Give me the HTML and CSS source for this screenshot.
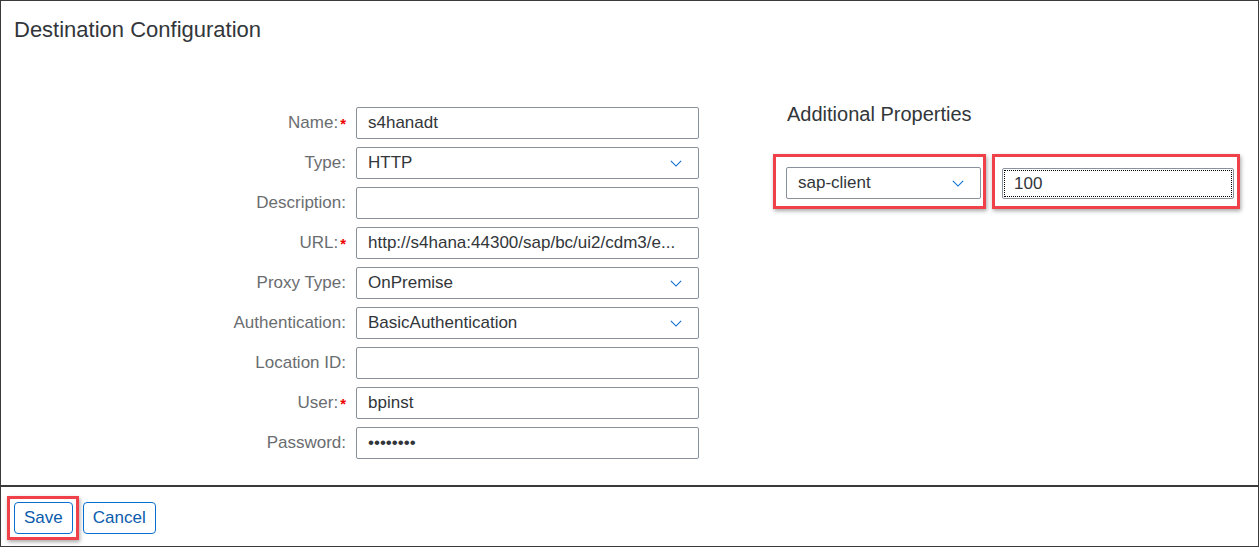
FILE: index.html
```html
<!DOCTYPE html>
<html>
<head>
<meta charset="utf-8">
<title>Destination Configuration</title>
<link rel="stylesheet" href="styles.css">
</head>
<body>
<div class="frame">
  <div class="header"><h1 class="title">Destination Configuration</h1></div>
  <div class="content">
    <div class="form">
      <label class="lbl">Name:<span class="req">*</span></label>
      <div class="field">s4hanadt</div>
      <label class="lbl">Type:</label>
      <div class="field select">HTTP<svg class="chev" viewBox="0 0 14 8"><path d="M1 1 L7 7 L13 1"/></svg></div>
      <label class="lbl">Description:</label>
      <div class="field"></div>
      <label class="lbl">URL:<span class="req">*</span></label>
      <div class="field">http://s4hana:44300/sap/bc/ui2/cdm3/e...</div>
      <label class="lbl">Proxy Type:</label>
      <div class="field select">OnPremise<svg class="chev" viewBox="0 0 14 8"><path d="M1 1 L7 7 L13 1"/></svg></div>
      <label class="lbl">Authentication:</label>
      <div class="field select">BasicAuthentication<svg class="chev" viewBox="0 0 14 8"><path d="M1 1 L7 7 L13 1"/></svg></div>
      <label class="lbl">Location ID:</label>
      <div class="field"></div>
      <label class="lbl">User:<span class="req">*</span></label>
      <div class="field">bpinst</div>
      <label class="lbl">Password:</label>
      <div class="field pwd">&#8226;&#8226;&#8226;&#8226;&#8226;&#8226;&#8226;&#8226;</div>
    </div>
    <div class="props">
      <h2 class="props-title">Additional Properties</h2>
      <div class="props-row">
        <div class="mark mark-key">
          <div class="field select key">sap-client<svg class="chev" viewBox="0 0 14 8"><path d="M1 1 L7 7 L13 1"/></svg></div>
        </div>
        <div class="mark mark-val">
          <div class="field val"><span class="focus">100</span></div>
        </div>
      </div>
    </div>
  </div>
  <div class="footer">
    <div class="mark mark-btn"><button class="btn">Save</button></div>
    <button class="btn">Cancel</button>
  </div>
</div>
</body>
</html>
```

FILE: styles.css
```css
* { box-sizing: border-box; }
html, body { margin: 0; padding: 0; background: #fff; }
body {
  font-family: "Liberation Sans", Arial, sans-serif;
  color: #32363a;
  width: 1260px;
  height: 548px;
}
.frame {
  width: 1259px;
  height: 547px;
  border: 1px solid #3a3a3a;
  display: flex;
  flex-direction: column;
}
.header { padding: 16px 13px 0; height: 106px; }
.title {
  margin: 0;
  font-size: 22px;
  font-weight: normal;
  line-height: 26px;
  color: #32363a;
}
.content {
  flex: 1;
  display: flex;
  align-items: flex-start;
}
.form {
  margin-left: 199px;
  display: grid;
  grid-template-columns: 147px 343px;
  grid-auto-rows: 32px;
  column-gap: 9px;
  row-gap: 8px;
}
.lbl {
  font-size: 17px;
  color: #6a6d70;
  display: flex;
  align-items: center;
  justify-content: flex-end;
  padding-right: 1px;
  white-space: nowrap;
}
.req { color: #e00; font-weight: bold; margin-left: 2px; font-size: 15px; }
.field {
  height: 32px;
  border: 1px solid #89919a;
  border-radius: 2px;
  background: #fff;
  font-size: 17px;
  color: #32363a;
  display: flex;
  align-items: center;
  padding: 0 11px;
  white-space: nowrap;
  overflow: hidden;
}
.select { justify-content: space-between; }
.chev {
  width: 12px;
  height: 7px;
  margin-right: 5px;
  fill: none;
  stroke: #0a6ed1;
  stroke-width: 1.3;
  flex: none;
}
.pwd { font-size: 17px; }
.props { margin-left: 74px; margin-top: -5px; }
.props-title {
  margin: 0 0 0 14px;
  font-size: 20px;
  font-weight: normal;
  line-height: 24px;
  color: #32363a;
}
.props-row { display: flex; gap: 6px; margin-top: 28px; }
.mark {
  border: 3px solid #f0404a;
  box-shadow: 1px 2px 4px rgba(0,0,0,0.35);
}
.mark-key { width: 213px; height: 55px; padding: 10px 2px 0 10px; }
.mark-val { width: 248px; height: 55px; padding: 11px 3px 0 7px; }
.key { width: 195px; height: 32px; }
.val { width: 232px; height: 31px; padding: 1px; }
.focus {
  display: flex;
  align-items: center;
  width: 100%;
  height: 100%;
  border: 1px dotted #000;
  padding-left: 9px;
}
.footer {
  border-top: 2px solid #3a3a3a;
  height: 61px;
  display: flex;
  align-items: flex-start;
  gap: 4px;
  padding: 9px 0 0 6px;
}
.mark-btn { padding: 3px 3px 3px 4px; }
.btn {
  height: 32px;
  border: 1px solid #0a6ed1;
  border-radius: 4px;
  background: #fff;
  color: #0b5cad;
  font-family: "Liberation Sans", Arial, sans-serif;
  font-size: 17px;
  padding: 0 9px;
  margin: 0;
}
.footer > .btn { margin-top: 6px; }
```
